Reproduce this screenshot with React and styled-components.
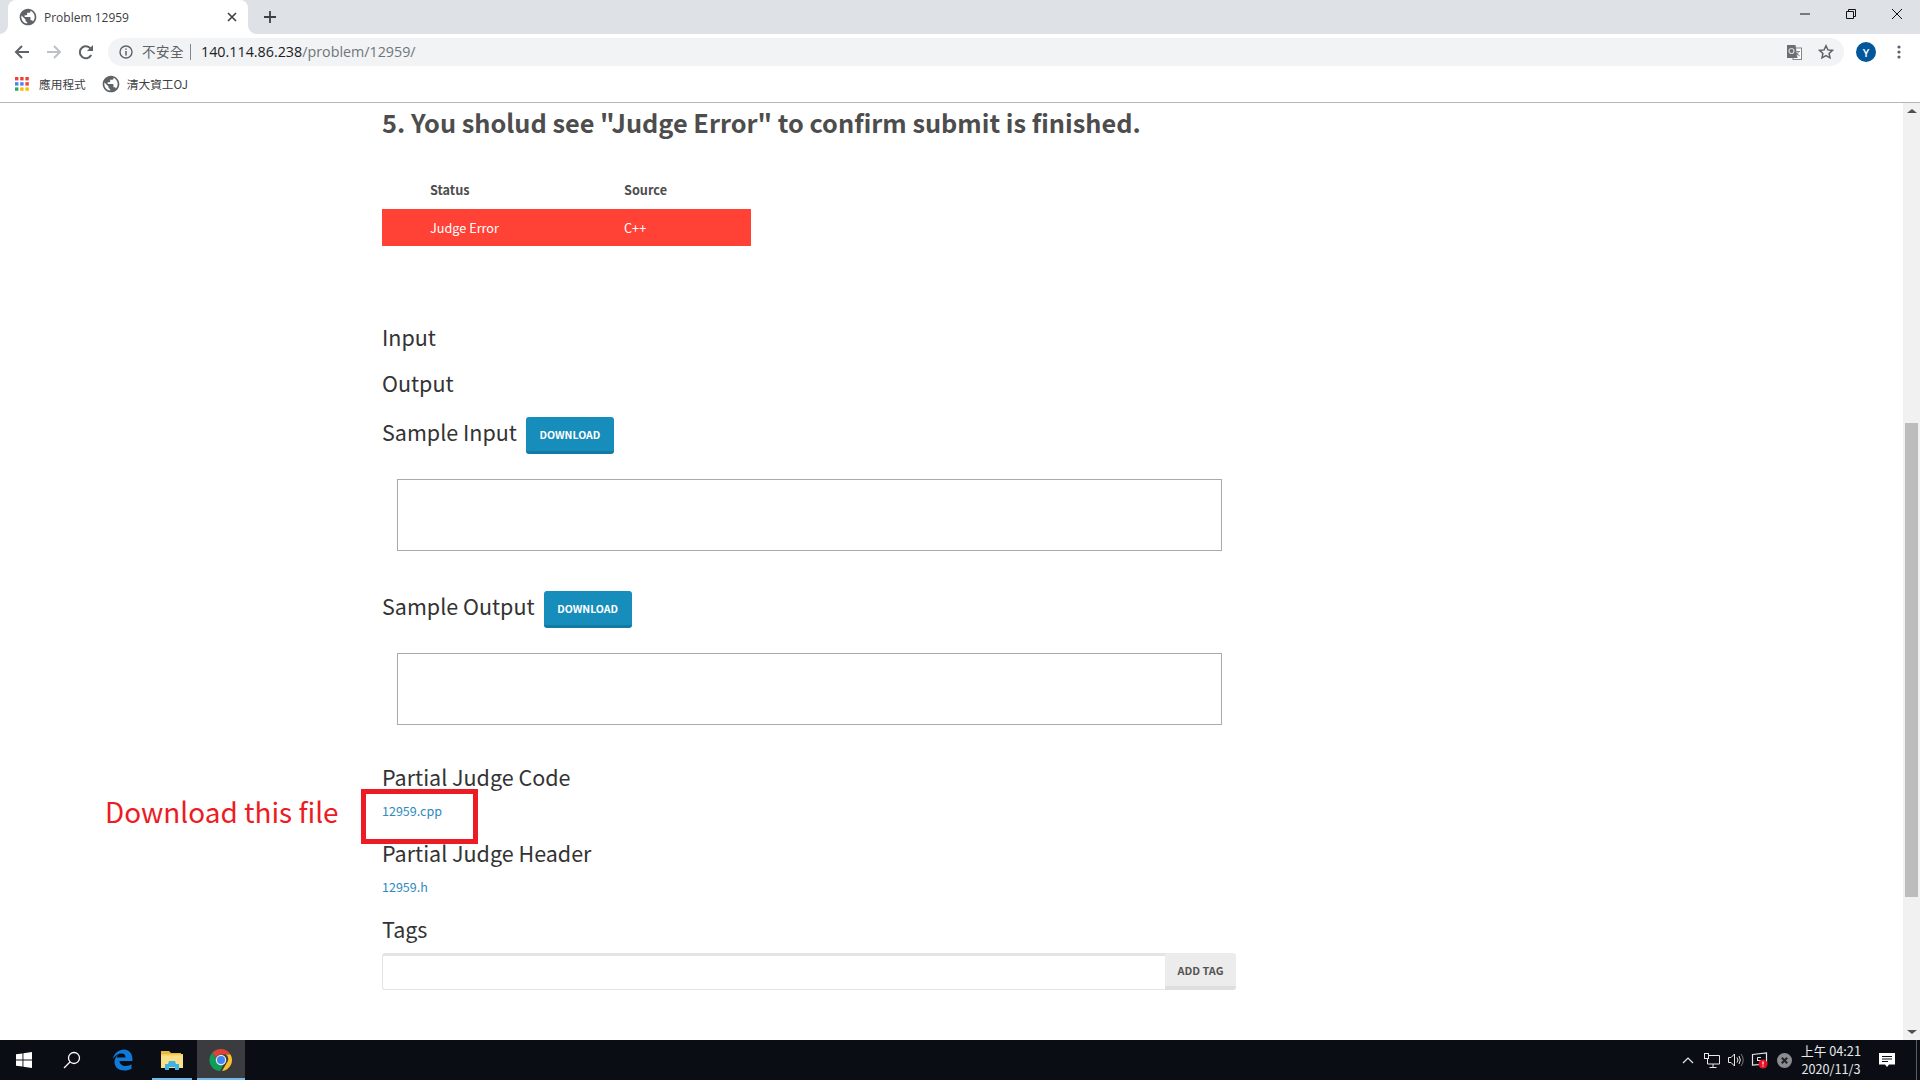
import React from 'react';
import styled, { createGlobalStyle } from 'styled-components';
import { MdPublic } from 'react-icons/md';

const pageFont = '"Noto Sans CJK TC", "Noto Sans", sans-serif';

const GlobalStyle = createGlobalStyle`
    html, body { margin: 0; padding: 0; height: 100%; overflow: hidden; background: #fff; }
    * { box-sizing: border-box; }
    body { font-family: "Open Sans", "Noto Sans CJK TC", sans-serif; }
`;

const Page = styled.div`
    width: 1920px;
    height: 1080px;
    display: flex;
    flex-direction: column;
`;

/* browser chrome */
const TabStrip = styled.div`
    height: 34px;
    flex: none;
    background: #dee1e6;
    display: flex;
    align-items: flex-end;
    padding-left: 8px;
`;

const Tab = styled.div`
    position: relative;
    width: 240px;
    height: 34px;
    background: #fff;
    border-radius: 8px 8px 0 0;
    display: flex;
    align-items: center;
    padding: 0 11px 0 10px;
    color: #3c4043;
    &::before, &::after {
        content: '';
        position: absolute;
        bottom: 0;
        width: 8px;
        height: 8px;
    }
    &::before { left: -8px; background: radial-gradient(circle at 0 0, #dee1e6 7.5px, #fff 8px); }
    &::after { right: -8px; background: radial-gradient(circle at 100% 0, #dee1e6 7.5px, #fff 8px); }
`;

const TabTitle = styled.span`
    font-size: 12px;
    margin-left: 6px;
    flex: 1;
`;

const NewTab = styled.div`
    margin-left: 16px;
    height: 34px;
    display: flex;
    align-items: center;
`;

const WindowControls = styled.div`
    margin-left: auto;
    height: 34px;
    display: flex;
    align-self: flex-start;
`;

const WindowButton = styled.div`
    width: 46px;
    height: 28px;
    display: flex;
    align-items: center;
    justify-content: center;
`;

const Toolbar = styled.div`
    height: 36px;
    flex: none;
    display: flex;
    align-items: center;
    padding-left: 6px;
`;

const NavButton = styled.div`
    width: 32px;
    height: 28px;
    display: flex;
    align-items: center;
    justify-content: center;
`;

const Omnibox = styled.div`
    width: 1736px;
    height: 28px;
    margin-left: 6px;
    background: #f1f3f4;
    border-radius: 14px;
    display: flex;
    align-items: center;
    padding: 0 10px 0 11px;
    font-size: 14.3px;
`;

const Insecure = styled.span`
    margin: -2px 0 0 9px;
    color: #5f6368;
    font-size: 13.5px;
    letter-spacing: 0.5px;
`;

const Divider = styled.span`
    width: 1px;
    height: 16px;
    background: #80868b;
    margin: 0 10px 0 6px;
`;

const UrlText = styled.span`
    margin-top: -2px;
`;

const Host = styled.span`
    color: #202124;
`;

const UrlPath = styled.span`
    color: #70757a;
`;

const OmniActions = styled.div`
    margin-left: auto;
    display: flex;
    align-items: center;
    gap: 16px;
`;

const Avatar = styled.div`
    width: 20px;
    height: 20px;
    margin-left: 12px;
    border-radius: 50%;
    background: #01579b;
    color: #fff;
    font-size: 11px;
    font-weight: 600;
    display: flex;
    align-items: center;
    justify-content: center;
`;

const MenuDots = styled.div`
    margin-left: 21px;
    display: flex;
    align-items: center;
`;

const BookmarkBar = styled.div`
    height: 33px;
    flex: none;
    display: flex;
    align-items: center;
    padding: 0 0 5px 15px;
    border-bottom: 1px solid #b6b6b6;
    font-size: 11.7px;
    color: #3c4043;
`;

const Bookmark = styled.div`
    display: flex;
    align-items: center;
    gap: ${props => props.$gap}px;
    margin-right: 15px;
    font-family: "Noto Sans CJK TC", sans-serif;
`;

/* page */
const Viewport = styled.div`
    flex: 1;
    min-height: 0;
    display: flex;
    overflow: hidden;
    position: relative;
`;

const Content = styled.main`
    flex: 1;
    padding: 1px 0 0 382px;
    font-family: ${pageFont};
    color: #333;
`;

const Heading = styled.h3`
    margin: 0 0 32px;
    font-size: 25.3px;
    line-height: 36px;
    font-weight: 700;
    color: #4d4d4d;
`;

const StatusTable = styled.div`
    width: 369px;
    display: grid;
    grid-template-columns: 194px 1fr;
    font-size: 12.7px;
`;

const HeaderCell = styled.div`
    height: 37px;
    padding: 0 0 2px 48px;
    display: flex;
    align-items: center;
    font-weight: 700;
    color: #4d4d4d;
`;

const ErrorCell = styled.div`
    height: 37px;
    padding-left: 48px;
    display: flex;
    align-items: center;
    background: #ff4136;
    color: #fff;
`;

const Title = styled.h4`
    margin: ${props => props.$top || 0}px 0 0;
    font-size: 21.5px;
    line-height: 30px;
    font-weight: 400;
    color: #333;
`;

const TitleRow = styled.div`
    display: flex;
    align-items: flex-start;
    gap: 9px;
    margin-top: ${props => props.$top}px;
    height: 37px;
`;

const DownloadButton = styled.button`
    width: 88px;
    height: 37px;
    padding: 0;
    border: 0;
    border-bottom: 3px solid #127ba3;
    border-radius: 3px;
    background: #178dbb;
    color: #fff;
    font-family: ${pageFont};
    font-size: 10.5px;
    font-weight: 700;
`;

const SampleBox = styled.div`
    width: 825px;
    height: 72px;
    margin: 25px 0 0 15px;
    border: 1px solid #aaa;
`;

const FileLink = styled.a`
    display: block;
    margin-top: ${props => props.$top}px;
    font-size: 12.5px;
    line-height: 18px;
    color: #2f8bbd;
`;

const TagForm = styled.div`
    width: 854px;
    height: 37px;
    margin-top: 9px;
    display: flex;
`;

const TagInput = styled.div`
    flex: 1;
    border: 1px solid #e4e4e4;
    border-top-width: 3px;
    border-right: 0;
    border-radius: 3px 0 0 3px;
`;

const TagButton = styled.button`
    width: 71px;
    padding: 0;
    border: 0;
    border-bottom: 4px solid #dedede;
    border-radius: 0 3px 3px 0;
    background: #ececec;
    color: #555;
    font-family: ${pageFont};
    font-size: 10.9px;
    font-weight: 700;
`;

/* annotation drawn on the screenshot */
const AnnotationText = styled.div`
    position: absolute;
    left: 105px;
    top: 688px;
    font-family: ${pageFont};
    font-size: 27.9px;
    font-weight: 400;
    line-height: 40px;
    color: #ed1c24;
`;

const AnnotationFrame = styled.div`
    position: absolute;
    left: 361px;
    top: 686px;
    width: 117px;
    height: 55px;
    border: 5px solid #ed1c24;
`;

/* scrollbar */
const Scrollbar = styled.div`
    width: 17px;
    flex: none;
    background: #f1f1f1;
    display: flex;
    flex-direction: column;
    align-items: center;
    justify-content: space-between;
    position: relative;
    padding: 6px 0;
`;

const Thumb = styled.div`
    position: absolute;
    top: 320px;
    left: 2px;
    width: 13px;
    height: 474px;
    background: #bcbcbc;
`;

const Arrow = styled.div`
    width: 0;
    height: 0;
    border-left: 5px solid transparent;
    border-right: 5px solid transparent;
    ${props => (props.$down ? 'border-top: 4px solid #505050;' : 'border-bottom: 4px solid #505050;')}
`;

/* taskbar */
const Taskbar = styled.footer`
    height: 40px;
    flex: none;
    background: #0a0e14;
    display: flex;
    align-items: center;
`;

const TaskItem = styled.div`
    position: relative;
    width: ${props => props.$width || 48}px;
    height: 40px;
    flex: none;
    margin-left: ${props => props.$gap || 0}px;
    display: flex;
    align-items: center;
    justify-content: center;
    background: ${props => (props.$active ? '#3a3c40' : 'transparent')};
    ${props => props.$running && `
        &::after {
            content: '';
            position: absolute;
            bottom: 0;
            left: ${props.$active ? 0 : 4}px;
            right: ${props.$active ? 0 : 4}px;
            height: 2px;
            background: #76b9ed;
        }
    `}
`;

const Tray = styled.div`
    margin-left: auto;
    height: 40px;
    display: flex;
    align-items: center;
    color: #fff;
`;

const TrayIcon = styled.div`
    width: 24px;
    height: 40px;
    display: flex;
    align-items: center;
    justify-content: center;
`;

const Clock = styled.div`
    width: 70px;
    font-family: "Noto Sans CJK TC", "Open Sans", sans-serif;
    font-size: 12.7px;
    line-height: 18px;
    text-align: center;
    color: #e8e8e8;
`;

const ShowDesktop = styled.div`
    width: 4px;
    height: 40px;
    margin-left: 13px;
    border-left: 1px solid #5a5e63;
`;

const Back = ({ color }) => (
    <svg width="16" height="16" viewBox="0 0 16 16" fill="none" stroke={color} strokeWidth="2">
        <path d="M15 8H2M8 2L2 8l6 6" />
    </svg>
);

const Forward = ({ color }) => (
    <svg width="16" height="16" viewBox="0 0 16 16" fill="none" stroke={color} strokeWidth="2">
        <path d="M1 8h13M8 2l6 6-6 6" />
    </svg>
);

const Reload = () => (
    <svg width="16" height="16" viewBox="0 0 16 16" fill="none">
        <path d="M13.2 11a6 6 0 1 1 .2-5" stroke="#5f6368" strokeWidth="2" />
        <path d="M15 1v6H9z" fill="#5f6368" />
    </svg>
);

const Info = () => (
    <svg width="14" height="14" viewBox="0 0 14 14" fill="none" stroke="#5f6368">
        <circle cx="7" cy="7" r="6" strokeWidth="1.4" />
        <path d="M7 6v4.4M7 3.4v1.4" strokeWidth="1.5" />
    </svg>
);

const Translate = () => (
    <svg width="15" height="15" viewBox="0 0 15 15">
        <rect x="6" y="3" width="8.500" height="11.500" fill="#fff" stroke="#80868b" />
        <path d="M0 0h8.500l2 13H0z" fill="#6a6e73" />
        <circle cx="4.500" cy="6" r="2.500" fill="none" stroke="#d5d7da" strokeWidth="1.200" />
        <path d="M9.500 6.500h3.500M11.200 6.500c0 2-1 3.500-2 4.500M10 8c.5 1.500 1.500 2.500 2.800 3" fill="none" stroke="#80868b" />
    </svg>
);

const Star = () => (
    <svg width="16" height="16" viewBox="0 0 16 16" fill="none" stroke="#5f6368" strokeWidth="1.500">
        <path d="M8 1.800l1.900 4.100 4.500.5-3.300 3 .9 4.400L8 11.600l-4 2.200.9-4.400-3.300-3 4.500-.5z" />
    </svg>
);

const Dots = () => (
    <svg width="4" height="14" viewBox="0 0 4 14" fill="#5f6368">
        <circle cx="2" cy="2" r="1.600" />
        <circle cx="2" cy="7" r="1.600" />
        <circle cx="2" cy="12" r="1.600" />
    </svg>
);

const AppsGrid = () => {
    const colors = ['#ea4335', '#ea4335', '#ea4335', '#4285f4', '#4285f4', '#ea4335', '#34a853', '#fbbc05', '#fbbc05'];
    return (
        <svg width="14" height="14" viewBox="0 0 14 14">
            {colors.map((fill, i) => (
                <rect key={i} x={(i % 3) * 5.2} y={Math.floor(i / 3) * 5.2} width="3.400" height="3.400" fill={fill} />
            ))}
        </svg>
    );
};

const WindowsLogo = () => (
    <svg width="16" height="16" viewBox="0 0 16 16" fill="#fff">
        <path d="M0 2.300L6.500 1.400V7.600H0zM7.400 1.300L16 0V7.600H7.400zM0 8.400H6.500V14.600L0 13.700zM7.400 8.400H16V16L7.400 14.700z" />
    </svg>
);

const SearchIcon = () => (
    <svg width="18" height="18" viewBox="0 0 18 18" fill="none" stroke="#fff" strokeWidth="1.300">
        <circle cx="11" cy="7" r="5.500" />
        <path d="M7 11l-6 6" />
    </svg>
);

const EdgeLogo = () => (
    <svg width="21" height="22" viewBox="0 0 21 22">
        <path
            d="M1 10C2 4 7 .5 12 .5c5 0 9 4 8.500 11.500H7.500c.2 3.500 3 5 6 5 2.500 0 4.500-.7 6-1.700v4.400c-2 1.200-4.300 1.800-7 1.800-6 0-10-3.500-10-8.500 0-3 1.300-5.500 4-7.500-1 1-1.500 2-1.800 3h8.800c0-2.500-1.300-4-3.700-4C6 4.500 3 6.500 1 10z"
            fill="#0f7ad8"
        />
    </svg>
);

const ExplorerLogo = () => (
    <svg width="22" height="20" viewBox="0 0 22 20">
        <path d="M0 1h8l2 2h10v2H0z" fill="#e8b93c" />
        <rect y="4" width="22" height="14" fill="#fbe08a" />
        <rect y="4" width="22" height="1.500" fill="#f6cf5b" />
        <path d="M4 20v-6h3l1-3h6l1 3h3v6h-4v-3H8v3z" fill="#3fb2e6" />
    </svg>
);

const ChromeLogo = () => (
    <svg width="24" height="24" viewBox="0 0 48 48">
        <path d="M24 2a22 22 0 0 1 19 11H24a11 11 0 0 0-10.500 7.500L7 9A22 22 0 0 1 24 2z" fill="#db4437" />
        <path d="M43 13a22 22 0 0 1-17 33l10-17a11 11 0 0 0-2-16z" fill="#fbc02d" />
        <path d="M7 9l9 16a11 11 0 0 0 12.500 9.500L22 46A22 22 0 0 1 7 9z" fill="#0f9d58" />
        <circle cx="24" cy="24" r="10.500" fill="#e8eaed" />
        <circle cx="24" cy="24" r="8" fill="#4285f4" />
    </svg>
);

const ChevronUp = () => (
    <svg width="12" height="8" viewBox="0 0 12 8" fill="none" stroke="#e8e8e8" strokeWidth="1.200">
        <path d="M1 7l5-5 5 5" />
    </svg>
);

const NetworkIcon = () => (
    <svg width="16" height="15" viewBox="0 0 16 15" fill="none" stroke="#e8e8e8">
        <path d="M3.500 2.500h12v8.500h-12zM9 11v3M5.500 14.500h7" />
        <rect x="0.500" y="0.500" width="4" height="5" fill="#0a0e14" />
    </svg>
);

const VolumeIcon = () => (
    <svg width="16" height="14" viewBox="0 0 16 14" fill="none" stroke="#e8e8e8">
        <path d="M.500 4.500h2.500L6.500 1v12L3 9.500H.500z" />
        <path d="M9 4.500a4 4 0 0 1 0 5M11 3a7 7 0 0 1 0 8" />
        <path d="M13 1a10 10 0 0 1 0 12" stroke="#777" />
    </svg>
);

const AlertIcon = () => (
    <svg width="18" height="18" viewBox="0 0 18 18" fill="none">
        <path d="M1.500 3.500l14-1.500v11l-14 1z" stroke="#e8e8e8" strokeWidth="1.200" />
        <path d="M10 6.500H6.500v3.500M6 9.500h4.500" stroke="#e8e8e8" />
        <circle cx="12" cy="13" r="4.500" fill="#e81123" />
        <path d="M12 10.500v3M12 14.500v1" stroke="#fff" strokeWidth="1.200" />
    </svg>
);

const ClosedCircle = () => (
    <svg width="15" height="15" viewBox="0 0 15 15">
        <circle cx="7.500" cy="7.500" r="7.500" fill="#8a8c8f" />
        <path d="M4.800 4.800l5.400 5.400M10.200 4.800l-5.400 5.400" stroke="#222" strokeWidth="2" />
    </svg>
);

const NotifyIcon = () => (
    <svg width="16" height="16" viewBox="0 0 16 16">
        <path d="M0 1h16v11.500H10L8 15l-2-2.500H0z" fill="#fff" />
        <path d="M3 4.500h10M3 7h10M3 9.500h6" stroke="#0a0e14" />
    </svg>
);

const App = () => {
    return (
        <Page>
            <GlobalStyle />
            <TabStrip>
                <Tab>
                    <MdPublic size={20} color="#5f6368" />
                    <TabTitle>Problem 12959</TabTitle>
                    <svg width="10" height="10" viewBox="0 0 10 10" stroke="#3c4043" strokeWidth="1.600">
                        <path d="M1 1l8 8M9 1l-8 8" />
                    </svg>
                </Tab>
                <NewTab>
                    <svg width="12" height="12" viewBox="0 0 12 12" stroke="#3c4043" strokeWidth="1.800">
                        <path d="M6 0v12M0 6h12" />
                    </svg>
                </NewTab>
                <WindowControls>
                    <WindowButton>
                        <svg width="10" height="2" viewBox="0 0 10 2" stroke="#111"><path d="M0 1h10" /></svg>
                    </WindowButton>
                    <WindowButton>
                        <svg width="10" height="10" viewBox="0 0 10 10" fill="none" stroke="#111">
                            <path d="M.5 2.500h7v7h-7zM2.500 2.500v-2h7v7h-2" />
                        </svg>
                    </WindowButton>
                    <WindowButton>
                        <svg width="10" height="10" viewBox="0 0 10 10" stroke="#111"><path d="M0 0l10 10M10 0L0 10" /></svg>
                    </WindowButton>
                </WindowControls>
            </TabStrip>

            <Toolbar>
                <NavButton><Back color="#5f6368" /></NavButton>
                <NavButton><Forward color="#bdc1c6" /></NavButton>
                <NavButton><Reload /></NavButton>
                <Omnibox>
                    <Info />
                    <Insecure>不安全</Insecure>
                    <Divider />
                    <UrlText>
                        <Host>140.114.86.238</Host>
                        <UrlPath>/problem/12959/</UrlPath>
                    </UrlText>
                    <OmniActions>
                        <Translate />
                        <Star />
                    </OmniActions>
                </Omnibox>
                <Avatar>Y</Avatar>
                <MenuDots><Dots /></MenuDots>
            </Toolbar>

            <BookmarkBar>
                <Bookmark $gap={10}><AppsGrid />應用程式</Bookmark>
                <Bookmark $gap={6}><MdPublic size={20} color="#5f6368" />清大資工OJ</Bookmark>
            </BookmarkBar>

            <Viewport>
                <Content>
                    <Heading>5. You sholud see "Judge Error" to confirm submit is finished.</Heading>
                    <StatusTable>
                        <HeaderCell>Status</HeaderCell>
                        <HeaderCell>Source</HeaderCell>
                        <ErrorCell>Judge Error</ErrorCell>
                        <ErrorCell>C++</ErrorCell>
                    </StatusTable>
                    <Title $top={76}>Input</Title>
                    <Title $top={16}>Output</Title>
                    <TitleRow $top={19}>
                        <Title>Sample Input</Title>
                        <DownloadButton>DOWNLOAD</DownloadButton>
                    </TitleRow>
                    <SampleBox />
                    <TitleRow $top={40}>
                        <Title>Sample Output</Title>
                        <DownloadButton>DOWNLOAD</DownloadButton>
                    </TitleRow>
                    <SampleBox />
                    <Title $top={37}>Partial Judge Code</Title>
                    <FileLink $top={10}>12959.cpp</FileLink>
                    <Title $top={18}>Partial Judge Header</Title>
                    <FileLink $top={10}>12959.h</FileLink>
                    <Title $top={18}>Tags</Title>
                    <TagForm>
                        <TagInput />
                        <TagButton>ADD TAG</TagButton>
                    </TagForm>
                </Content>
                <AnnotationText>Download this file</AnnotationText>
                <AnnotationFrame />
                <Scrollbar>
                    <Arrow />
                    <Thumb />
                    <Arrow $down />
                </Scrollbar>
            </Viewport>

            <Taskbar>
                <TaskItem><WindowsLogo /></TaskItem>
                <TaskItem><SearchIcon /></TaskItem>
                <TaskItem $gap={2}><EdgeLogo /></TaskItem>
                <TaskItem $gap={2} $running><ExplorerLogo /></TaskItem>
                <TaskItem $gap={1} $running $active><ChromeLogo /></TaskItem>
                <Tray>
                    <TrayIcon><ChevronUp /></TrayIcon>
                    <TrayIcon><NetworkIcon /></TrayIcon>
                    <TrayIcon><VolumeIcon /></TrayIcon>
                    <TrayIcon><AlertIcon /></TrayIcon>
                    <TrayIcon><ClosedCircle /></TrayIcon>
                    <Clock>上午 04:21<br />2020/11/3</Clock>
                    <TaskItem $gap={5} $width={32}><NotifyIcon /></TaskItem>
                    <ShowDesktop />
                </Tray>
            </Taskbar>
        </Page>
    );
};

export default App;
